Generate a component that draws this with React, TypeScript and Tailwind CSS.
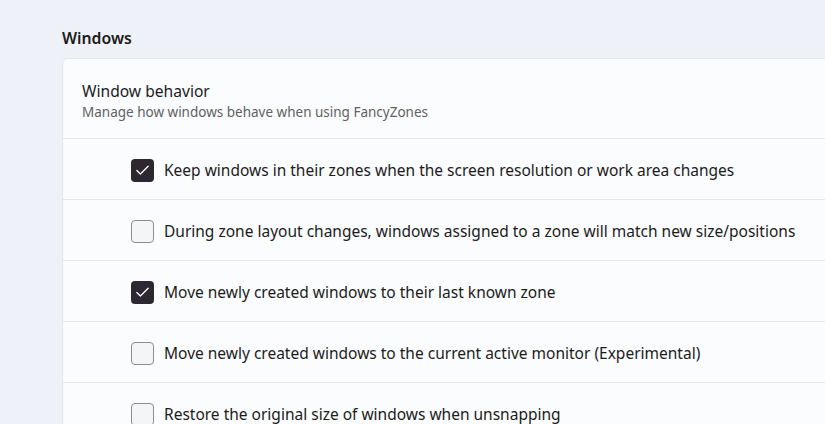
import { Check } from 'lucide-react';

const options = [
  { label: 'Keep windows in their zones when the screen resolution or work area changes', checked: true },
  { label: 'During zone layout changes, windows assigned to a zone will match new size/positions', checked: false },
  { label: 'Move newly created windows to their last known zone', checked: true },
  { label: 'Move newly created windows to the current active monitor (Experimental)', checked: false },
  { label: 'Restore the original size of windows when unsnapping', checked: false },
];

const CheckBox = ({ checked }: { checked: boolean }) =>
  checked ? (
    <div className="w-[23px] h-[23px] rounded-[4px] bg-[#2c2731] flex items-center justify-center shrink-0">
      <Check className="w-[17px] h-[17px] text-white" strokeWidth={1.8} />
    </div>
  ) : (
    <div className="w-[23px] h-[23px] rounded-[4px] bg-[#f4f5f7] border border-[#8d8d8f] shrink-0" />
  );

export default function App() {
  return (
    <div
      className="w-[825px] h-[424px] overflow-hidden bg-[#eef2f8] pl-[62px] pt-[26px]"
      style={{ fontFamily: '"Noto Sans", "Open Sans", sans-serif' }}
    >
      <h2 className="text-[15.8px] font-semibold text-[#1b1b1b] leading-[24px] mb-[8px]">Windows</h2>

      <div className="w-[800px] bg-[#fbfcfe] border border-[#e3e6ea] rounded-tl-[6px]">
        <div className="h-[80px] pl-[19px] pt-[4px] flex flex-col justify-center border-b border-[#e4e6ea]">
          <div className="text-[15.6px] text-[#1b1b1b] leading-[22px]">Window behavior</div>
          <div className="text-[13.5px] text-[#616161] leading-[20px]">Manage how windows behave when using FancyZones</div>
        </div>

        {options.map((o, i) => (
          <div
            key={i}
            className="h-[61px] pl-[68px] pt-[3px] flex items-center gap-[10px] border-b border-[#e4e6ea] whitespace-nowrap"
          >
            <CheckBox checked={o.checked} />
            <span className="text-[15.5px] text-[#1b1b1b]">{o.label}</span>
          </div>
        ))}
      </div>
    </div>
  );
}
